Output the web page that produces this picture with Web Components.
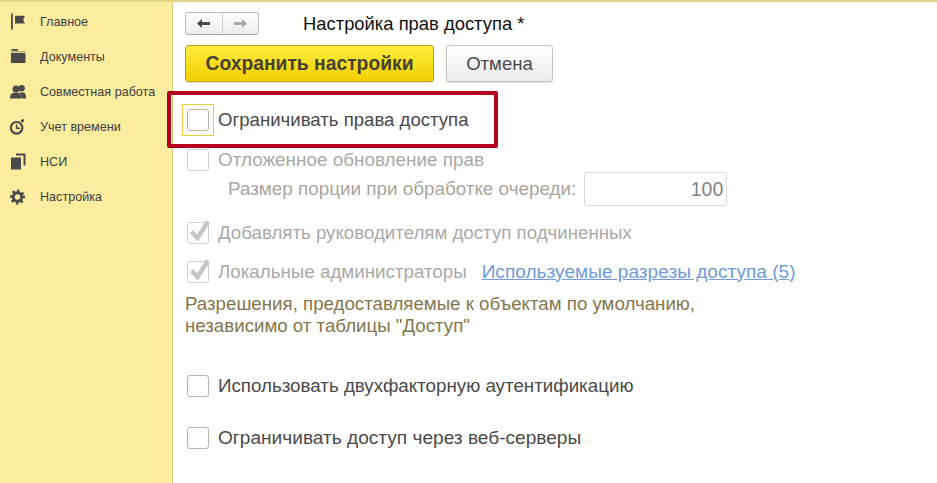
<!DOCTYPE html>
<html lang="ru">
<head>
<meta charset="utf-8">
<title>Настройка прав доступа</title>
<style>
  html, body { margin: 0; height: 100%; overflow: hidden; }
  body { font-family: "Liberation Sans", Arial, sans-serif; background: #fff; }
</style>
</head>
<body>
<app-shell>
  <side-nav slot="side">
    <nav-item label="Главное" icon="flag"></nav-item>
    <nav-item label="Документы" icon="folder"></nav-item>
    <nav-item label="Совместная работа" icon="people"></nav-item>
    <nav-item label="Учет времени" icon="timer"></nav-item>
    <nav-item label="НСИ" icon="pages"></nav-item>
    <nav-item label="Настройка" icon="gear"></nav-item>
  </side-nav>

  <history-buttons slot="head"></history-buttons>
  <span slot="title">Настройка прав доступа *</span>

  <cmd-button slot="actions" primary>Сохранить настройки</cmd-button>
  <cmd-button slot="actions">Отмена</cmd-button>

  <check-row focused style="height:56px">Ограничивать права доступа</check-row>
  <check-row disabled style="height:24px;font-size:18.900px">Отложенное обновление прав</check-row>
  <portion-row></portion-row>
  <check-row disabled checked style="height:39px;margin-top:7px;font-size:18.700px">Добавлять руководителям доступ подчиненных</check-row>
  <check-row disabled checked style="height:39px;font-size:18.750px">Локальные администраторы
    <a-link slot="after">Используемые разрезы доступа (5)</a-link>
  </check-row>
  <note-text>Разрешения, предоставляемые к объектам по умолчанию,<br>независимо от таблицы "Доступ"</note-text>
  <check-row style="height:24px;margin-top:37px;font-size:18.750px">Использовать двухфакторную аутентификацию</check-row>
  <check-row style="height:24px;margin-top:28px;font-size:19.100px">Ограничивать доступ через веб-серверы</check-row>

  <red-frame slot="overlay"></red-frame>
</app-shell>

<script>
const ICONS = {
  flag: '<path d="M1 1.500h1.800v16H1z"/><path d="M5 3.800h10l-1.800 3.800 1.800 3.900H5z"/>',
  folder: '<path d="M1.500 2h6l1 1.800h-7z"/><path opacity=".55" d="M1 4.300h14.500v1H1z"/><path d="M1 6h14.500v10H1z"/>',
  people: '<circle cx="11.600" cy="6.200" r="3.200"/><path d="M9 10.500h5c1.500.6 2 2.500 2 6h-4.500c0-2.500-.8-4.500-2.500-6z"/><circle cx="6" cy="7" r="3.500"/><path d="M0 16.500c0-3.500 1-5 3.500-5.700h5c2 .7 2.600 2.200 2.600 5.700z"/>',
  timer: '<circle cx="6.600" cy="10.800" r="5.800" fill="none" stroke="#4a4a4a" stroke-width="2.200"/><path d="M5.800 7.500h1.600v3h2.600V12H5.800z"/><path d="M10.500 3.600l2.700-1.900 1.300 2.300-2.600 1.800z"/>',
  pages: '<path d="M1 5.500h10v12H1z"/><path d="M6 1.500h9.500v12h-2V3.500H6z"/>',
  gear: '<circle cx="7.500" cy="10" r="4.200" fill="none" stroke="#4a4a4a" stroke-width="3"/><circle cx="7.500" cy="10" r="6.200" fill="none" stroke="#4a4a4a" stroke-width="2.600" stroke-dasharray="2.435 2.435" transform="rotate(-11.250 7.500 10)"/>'
};

class AppShell extends HTMLElement {
  constructor() {
    super();
    this.attachShadow({ mode: "open" });
    this.shadowRoot.innerHTML = `
      <style>
        :host { display: flex; position: relative; width: 937px; height: 483px; overflow: hidden;
                box-sizing: border-box; border-top: 2px solid #e3d27f; }
        .side { flex: none; width: 172px; }
        main { flex: 1; padding: 10px 0 0 12px; border-left: 1px solid #dccb7c; }
        .head { display: flex; align-items: center; height: 23px; font-size: 18.400px; color: #111; }
        .head ::slotted([slot=title]) { margin-left: 44px; }
        .actions { display: flex; gap: 12px; margin-top: 10px; height: 37px; margin-bottom: 10px; }
      </style>
      <div class="side"><slot name="side"></slot></div>
      <main>
        <div class="head"><slot name="head"></slot><slot name="title"></slot></div>
        <div class="actions"><slot name="actions"></slot></div>
        <slot></slot>
      </main>
      <slot name="overlay"></slot>
    `;
  }
}

class SideNav extends HTMLElement {
  constructor() {
    super();
    this.attachShadow({ mode: "open" });
    this.shadowRoot.innerHTML = `
      <style>
        :host { display: block; height: 100%; background: #fbec9e; padding-top: 2px; box-sizing: border-box; }
      </style>
      <slot></slot>
    `;
  }
}

class NavItem extends HTMLElement {
  constructor() {
    super();
    this.attachShadow({ mode: "open" });
    this.shadowRoot.innerHTML = `
      <style>
        :host { display: flex; align-items: center; height: 35px; padding-left: 10px;
                font-size: 12.600px; color: #3f3f3f; }
        svg { width: 16px; height: 19px; margin-right: 14px; fill: #4a4a4a; flex: none; overflow: visible; }
      </style>
      <svg viewBox="0 0 16 19"></svg><span></span>
    `;
  }
  connectedCallback() {
    this.shadowRoot.querySelector("svg").innerHTML = ICONS[this.getAttribute("icon")] || "";
    this.shadowRoot.querySelector("span").textContent = this.getAttribute("label");
  }
}

class HistoryButtons extends HTMLElement {
  constructor() {
    super();
    this.attachShadow({ mode: "open" });
    this.shadowRoot.innerHTML = `
      <style>
        :host { display: flex; width: 74px; height: 23px; box-sizing: border-box; border: 1px solid #bdbdbd;
                border-bottom-color: #a8a8a8; border-radius: 3px;
                background: linear-gradient(#fff, #ececec); }
        div { display: flex; align-items: center; justify-content: center; flex: 1; }
        div + div { border-left: 1px solid #d2d2d2; }
        svg { width: 15px; height: 11px; }
      </style>
      <div><svg viewBox="0 0 15 11"><path fill="#4a4a4a" d="M1 5.500 6 1v3h8v3H6v3z"/></svg></div>
      <div><svg viewBox="0 0 15 11"><path fill="#a8a8a8" d="M14 5.500 9 1v3H1v3h8v3z"/></svg></div>
    `;
  }
}

class CmdButton extends HTMLElement {
  constructor() {
    super();
    this.attachShadow({ mode: "open" });
    this.shadowRoot.innerHTML = `
      <style>
        :host { display: flex; align-items: center; justify-content: center; box-sizing: border-box;
                width: 107px; height: 37px; border: 1px solid #c4c4c4; border-radius: 3px;
                background: linear-gradient(#fff, #eaeaea); color: #4a4a4a; font-size: 18.600px;
                box-shadow: 0 1px 1px rgba(0,0,0,.12); }
        :host([primary]) { width: 249px; border-color: #b7a01a; font-weight: bold; font-size: 19.300px; color: #474231;
                background: linear-gradient(#ffee3f, #f2cf00); }
      </style>
      <slot></slot>
    `;
  }
}

class CheckRow extends HTMLElement {
  constructor() {
    super();
    this.attachShadow({ mode: "open" });
    this.shadowRoot.innerHTML = `
      <style>
        :host { display: flex; align-items: center; font-size: 18.600px; color: #4a4a4a; }
        :host([disabled]) { color: #a9a9a9; }
        .box { position: relative; flex: none; box-sizing: border-box; width: 22px; height: 22px;
               margin: 0 9px 0 2px; background: #fff; border: 1px solid #b3b3b3; border-radius: 3px; }
        :host([disabled]) .box { border-color: #cfcfcf; }
        :host([focused]) .box::before { content: ""; position: absolute; inset: -6px; border: 1px solid #eecd3a; }
        svg { display: none; position: absolute; left: 2px; top: -5px; width: 21px; height: 23px; }
        :host([checked]) svg { display: block; }
        ::slotted([slot=after]) { margin-left: 15px; }
      </style>
      <span class="box"><svg viewBox="0 0 21 23"><path fill="none" stroke="#c6c6c6" stroke-width="4.500" d="M1.500 13.500 7.500 20 18 3.500"/></svg></span>
      <span><slot></slot></span><slot name="after"></slot>
    `;
  }
}

class PortionRow extends HTMLElement {
  constructor() {
    super();
    this.attachShadow({ mode: "open" });
    this.shadowRoot.innerHTML = `
      <style>
        :host { display: flex; align-items: center; height: 34px; margin-top: 0; padding-left: 43px;
                font-size: 18.850px; color: #a9a59c; }
        .field { box-sizing: border-box; width: 143px; height: 34px; margin-left: 8px; padding-right: 3px;
                 border: 1px solid #d9d9d9; border-radius: 3px; text-align: right; line-height: 32px;
                 font-size: 19.500px; color: #858585; }
      </style>
      <span>Размер порции при обработке очереди:</span><div class="field">100</div>
    `;
  }
}

class ALink extends HTMLElement {
  constructor() {
    super();
    this.attachShadow({ mode: "open" });
    this.shadowRoot.innerHTML = `
      <style>
        :host { display: inline-block; color: #6f9bd8; text-decoration: underline; font-size: 19.100px; }
      </style>
      <slot></slot>
    `;
  }
}

class NoteText extends HTMLElement {
  constructor() {
    super();
    this.attachShadow({ mode: "open" });
    this.shadowRoot.innerHTML = `
      <style>
        :host { display: block; margin-top: 2px; font-size: 18.700px; line-height: 22px; color: #84764c; }
      </style>
      <slot></slot>
    `;
  }
}

class RedFrame extends HTMLElement {
  constructor() {
    super();
    this.attachShadow({ mode: "open" });
    this.shadowRoot.innerHTML = `
      <style>
        :host { position: absolute; left: 167px; top: 89px; width: 331px; height: 57px;
                box-sizing: border-box; border: 4px solid #b5001f; border-radius: 2px; pointer-events: none; }
      </style>
    `;
  }
}

customElements.define("app-shell", AppShell);
customElements.define("side-nav", SideNav);
customElements.define("nav-item", NavItem);
customElements.define("history-buttons", HistoryButtons);
customElements.define("cmd-button", CmdButton);
customElements.define("check-row", CheckRow);
customElements.define("portion-row", PortionRow);
customElements.define("a-link", ALink);
customElements.define("note-text", NoteText);
customElements.define("red-frame", RedFrame);
</script>
</body>
</html>
